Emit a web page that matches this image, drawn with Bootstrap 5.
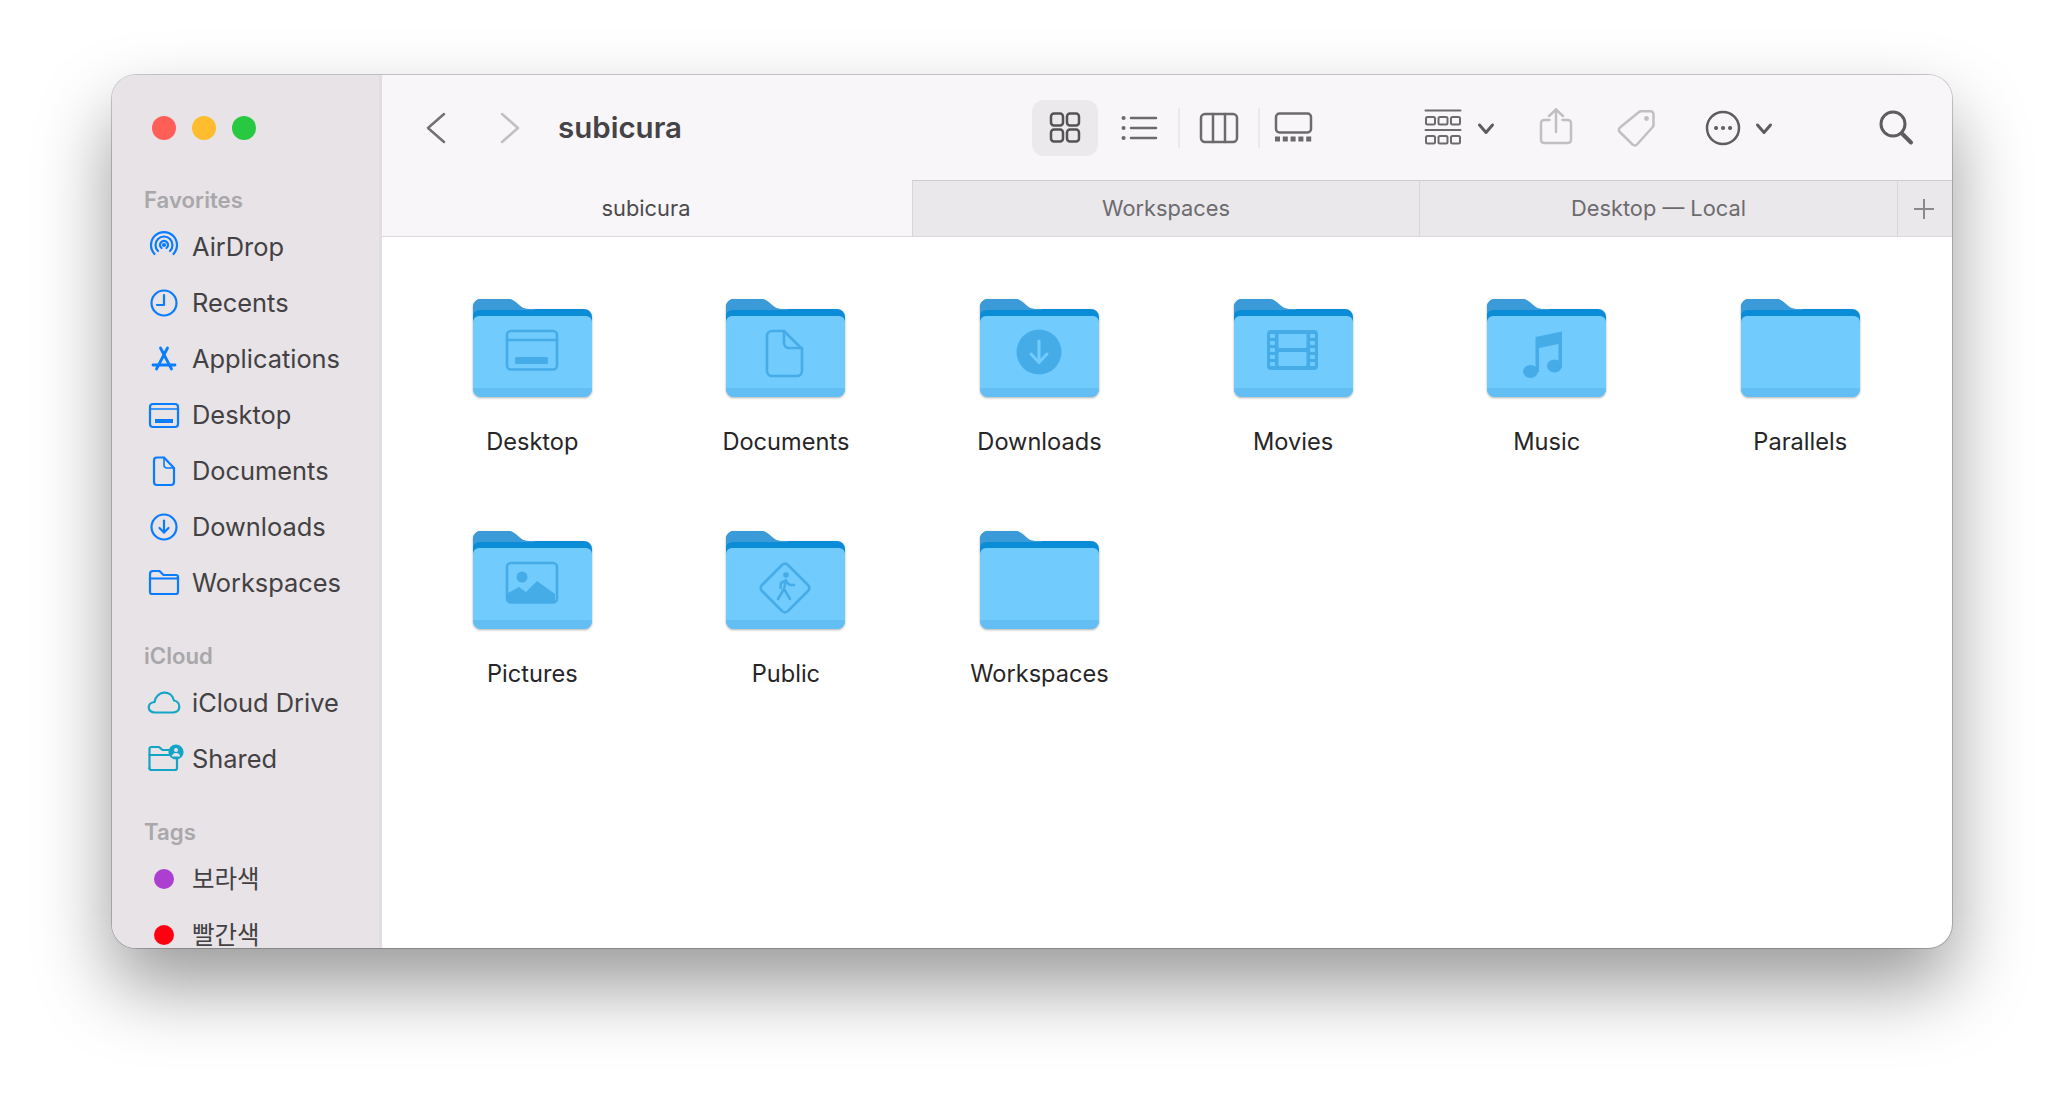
<!DOCTYPE html>
<html lang="en">
<head>
    <meta charset="UTF-8">
    <meta name="viewport" content="width=device-width, initial-scale=1.0">
    <title>Finder - subicura</title>
    <link href="https://cdn.jsdelivr.net/npm/bootstrap@5.3.0/dist/css/bootstrap.min.css" rel="stylesheet">
    <style>
        body { background: #fff; font-family: "Inter", "Noto Sans CJK KR", sans-serif; height: 1096px; overflow: hidden; padding: 75px 0 0 112px; }
        svg { display: block; flex: none; }

        .finder-window { width: 1840px; height: 873px; border-radius: 24px; overflow: hidden; background: #fff;
            box-shadow: 0 0 0 1px rgba(0,0,0,.2), 0 38px 76px rgba(0,0,0,.4); }

        /* sidebar */
        .side-panel { width: 270px; flex: none; background: #e7e3e6; border-right: 3px solid #e0dee0; padding-left: 32px; overflow: hidden; }
        .traffic { height: 24px; margin: 41px 0 0 8px; gap: 16px; }
        .traffic span { width: 24px; height: 24px; border-radius: 50%; }
        .side-label { font-size: 22.2px; font-weight: 600; line-height: 30px; color: #a9a7aa; margin: 30px 0 4px 0; }
        .side-label.first { margin-top: 45px; }
        .side-item { height: 56px; font-size: 25.4px; color: #434143; gap: 8px; }
        .side-item svg { fill: none; stroke: #0a7cff; stroke-width: 2.2; stroke-linecap: round; stroke-linejoin: round; }
        .side-item svg.cloud { stroke: #12a5c6; }
        .side-item .ko-name { font-size: 24.5px; }
        .tag-dot { width: 40px; height: 20px; flex: none; display: flex; justify-content: center; }
        .tag-dot span { width: 20px; height: 20px; border-radius: 50%; }

        /* toolbar */
        .tool-bar { height: 105px; background: #f8f6f9; padding: 0 36px 0 38px; }
        .tool-bar svg { fill: none; stroke: #6c6a6d; stroke-width: 2.5; stroke-linecap: round; stroke-linejoin: round; }
        .tool-bar svg.dim { stroke: #c1bfc2; }
        .fwd-btn { margin-left: 42px; }
        .win-title { font-size: 29.5px; font-weight: 600; color: #454345; margin-left: 32px; }
        .view-active { background: #ebe9ec; border-radius: 12px; height: 56px; width: 66px; }
        .view-active svg { stroke: #545255; }
        .view-list { margin-left: 11px; }
        .tool-sep { width: 2px; height: 40px; background: #ebe9ec; margin: 0 9px; }
        .tool-group { margin-left: 104px; }
        .tool-caret { margin-left: 13px; }
        .tool-caret.near { margin-left: 11px; }
        .tool-bar svg.caret-icon { stroke: #5e5c5f; stroke-width: 3; }
        .tool-share, .tool-tag { margin-left: 40px; }
        .tool-more { margin-left: 47px; }
        .tool-search { margin-left: 102px; }

        /* tabs */
        .tab-strip { height: 57px; border-bottom: 1px solid #dcdadc; font-size: 21.8px; color: #6d6b6e; }
        .tab-item { border-top: 1px solid #cdcbce; border-left: 1px solid #d8d6d9; background: #eae8eb; }
        .tab-item.on { background: #f8f6f9; border-top-color: #f8f6f9; border-left: 0; color: #4b494c; width: 530px; padding-right: 2px; }
        .tab-two { width: 507px; }
        .tab-three { width: 478px; }
        .tab-plus { width: 55px; padding-right: 3px; }

        /* folders */
        .folder-grid { display: grid; grid-template-columns: repeat(6, 253.6px); grid-auto-rows: 232px; padding: 62px 0 0 23.5px; }
        .folder-cell { display: flex; flex-direction: column; align-items: center; }
        .folder-cell svg { filter: drop-shadow(0 1px 1px rgba(0,0,0,.3)); }
        .folder-name { margin-top: 28px; font-size: 23.6px; line-height: 30px; color: #272527; }
        .glyph { fill: #45ace8; }
        .glyph-line { fill: none; stroke: #45ace8; stroke-width: 2.6; stroke-linecap: round; stroke-linejoin: round; }
    </style>
</head>
<body>

<!-- shared folder shape -->
<svg width="0" height="0" class="position-absolute">
    <symbol id="folder-base" viewBox="0 0 119 100">
        <path d="M8 0H34C38 0 40 1 43 3.500L47 7C49.500 9 51 10 55 10H111a8 8 0 0 1 8 8V30H0V8a8 8 0 0 1 8-8Z" fill="#0b8cd7"/>
        <path d="M8 0H34C38 0 40 1 43 3.500L47 7C49.500 9 51 10 55 10H62V11H8C3 11 0 13 0 17V8a8 8 0 0 1 8-8Z" fill="#3b9bd8"/>
        <path d="M6 17H113a6 6 0 0 1 6 6V90a8 8 0 0 1-8 8H8a8 8 0 0 1-8-8V23a6 6 0 0 1 6-6Z" fill="#72cbfd"/>
        <path d="M0 89H119V90a8 8 0 0 1-8 8H8a8 8 0 0 1-8-8Z" fill="#62bef3"/>
    </symbol>
</svg>

<div class="finder-window d-flex">

    <!-- Sidebar -->
    <aside class="side-panel">
        <div class="traffic d-flex">
            <span style="background:#ff5f57"></span>
            <span style="background:#febc2e"></span>
            <span style="background:#28c840"></span>
        </div>

        <div class="side-label first">Favorites</div>
        <div class="side-item d-flex align-items-center">
            <svg width="40" height="40" viewBox="0 0 40 40"><path d="M10.500 27A13 13 0 1 1 29.500 27"/><path d="M14 24A8.500 8.500 0 1 1 26 24"/><path d="M17.500 21A4 4 0 1 1 22.500 21"/><circle cx="20" cy="18" r="1" /></svg>
            <span>AirDrop</span>
        </div>
        <div class="side-item d-flex align-items-center">
            <svg width="40" height="40" viewBox="0 0 40 40"><circle cx="20" cy="20" r="12.500"/><path d="M20 12V22H13"/></svg>
            <span>Recents</span>
        </div>
        <div class="side-item d-flex align-items-center">
            <svg width="40" height="40" viewBox="0 0 40 40" style="stroke-width:2.8"><path d="M23.500 9L12.500 30"/><path d="M16.500 9L27.500 30"/><path d="M9 26H31"/></svg>
            <span>Applications</span>
        </div>
        <div class="side-item d-flex align-items-center">
            <svg width="40" height="40" viewBox="0 0 40 40"><rect x="6" y="9" width="28" height="23" rx="3"/><path d="M6 14H34" stroke-width="1.400"/><path d="M11 26H29" stroke-width="4" stroke-linecap="butt"/></svg>
            <span>Desktop</span>
        </div>
        <div class="side-item d-flex align-items-center">
            <svg width="40" height="40" viewBox="0 0 40 40"><path d="M13 6.500H20L30 17V31a3 3 0 0 1-3 3H13a3 3 0 0 1-3-3V9.500a3 3 0 0 1 3-3Z"/><path d="M20 6.500V14a3 3 0 0 0 3 3H30" stroke-width="1.600"/></svg>
            <span>Documents</span>
        </div>
        <div class="side-item d-flex align-items-center">
            <svg width="40" height="40" viewBox="0 0 40 40"><circle cx="20" cy="20" r="12.500"/><path d="M20 13.500V25.500"/><path d="M15.500 21L20 25.500L24.500 21"/></svg>
            <span>Downloads</span>
        </div>
        <div class="side-item d-flex align-items-center">
            <svg width="40" height="40" viewBox="0 0 40 40"><path d="M6 29V11a3 3 0 0 1 3-3H15.500L19.500 12H32a2 2 0 0 1 2 2V29a2 2 0 0 1-2 2H8a2 2 0 0 1-2-2Z"/><path d="M6 15.500H34"/></svg>
            <span>Workspaces</span>
        </div>

        <div class="side-label">iCloud</div>
        <div class="side-item d-flex align-items-center">
            <svg class="cloud" width="40" height="40" viewBox="0 0 40 40"><path d="M11 29.500C2.500 29.500 3 19.500 10.500 19C12 8 27 5.500 30 17.500C37 18.500 37.500 29.500 29 29.500Z"/></svg>
            <span>iCloud Drive</span>
        </div>
        <div class="side-item d-flex align-items-center">
            <svg class="cloud" width="40" height="40" viewBox="0 0 40 40"><path d="M5.500 30V10a2 2 0 0 1 2-2H15L18.500 11H25"/><path d="M5.500 16H25"/><path d="M5.500 29a2 2 0 0 0 2 2H31a2 2 0 0 0 2-2V20"/><circle cx="32" cy="13" r="6.500" fill="#12a5c6"/><circle cx="32" cy="11" r="2" fill="#e7e3e6" stroke="none"/><path d="M28 17.500a4 3.500 0 0 1 8 0Z" fill="#e7e3e6" stroke="none"/></svg>
            <span>Shared</span>
        </div>

        <div class="side-label">Tags</div>
        <div class="side-item d-flex align-items-center">
            <div class="tag-dot"><span style="background:#ab3fd0"></span></div>
            <span class="ko-name">보라색</span>
        </div>
        <div class="side-item d-flex align-items-center">
            <div class="tag-dot"><span style="background:#ff0010"></span></div>
            <span class="ko-name">빨간색</span>
        </div>
    </aside>

    <!-- Main area -->
    <main class="flex-grow-1 d-flex flex-column">
        <div class="tool-bar d-flex align-items-center">
            <svg width="32" height="40" viewBox="0 0 32 40"><path d="M24 6L8 20L24 34" stroke="#737174"/></svg>
            <svg class="dim fwd-btn" width="32" height="40" viewBox="0 0 32 40"><path d="M8 6L24 20L8 34"/></svg>
            <div class="win-title flex-grow-1">subicura</div>

            <div class="view-active d-flex align-items-center">
                <svg width="66" height="40" viewBox="0 0 66 40"><rect x="19" y="5.500" width="12" height="12" rx="3"/><rect x="35" y="5.500" width="12" height="12" rx="3"/><rect x="19" y="21.500" width="12" height="12" rx="3"/><rect x="35" y="21.500" width="12" height="12" rx="3"/></svg>
            </div>
            <svg class="view-list" width="60" height="40" viewBox="0 0 60 40"><path d="M22 10H47M22 20H47M22 30H47"/><path d="M14.500 10h.1M14.500 20h.1M14.500 30h.1" stroke-width="4"/></svg>
            <div class="tool-sep"></div>
            <svg width="60" height="40" viewBox="0 0 60 40"><rect x="12" y="6" width="36" height="28" rx="4"/><path d="M24 6V34M36 6V34"/></svg>
            <div class="tool-sep"></div>
            <svg width="50" height="40" viewBox="0 0 50 40"><rect x="7" y="5.500" width="35" height="19" rx="3.500"/><path d="M6 31h5M13.800 31h5M21.600 31h5M29.400 31h5M37.200 31h5" stroke-width="5" stroke-linecap="butt"/></svg>

            <svg class="tool-group" width="40" height="40" viewBox="0 0 40 40" style="stroke-width:2"><path d="M2.500 2.500H37.500M2.500 22H37.500"/><rect x="3" y="9" width="9" height="7.500" rx="1.500"/><rect x="15.500" y="9" width="9" height="7.500" rx="1.500"/><rect x="28" y="9" width="9" height="7.500" rx="1.500"/><rect x="3" y="28" width="9" height="7.500" rx="1.500"/><rect x="15.500" y="28" width="9" height="7.500" rx="1.500"/><rect x="28" y="28" width="9" height="7.500" rx="1.500"/></svg>
            <svg class="tool-caret caret-icon" width="20" height="40" viewBox="0 0 20 40"><path d="M3.500 17L10 24.500L16.500 17"/></svg>
            <svg class="tool-share dim" width="40" height="40" viewBox="0 0 40 40"><path d="M13.500 12H8a3 3 0 0 0-3 3V32a3 3 0 0 0 3 3H32a3 3 0 0 0 3-3V15a3 3 0 0 0-3-3H26.500"/><path d="M20 24V1.500"/><path d="M13 8L20 1.500L27 8"/></svg>
            <svg class="tool-tag dim" width="40" height="40" viewBox="0 0 40 40"><path d="M4 19.500L23 4a3 3 0 0 1 2-.7H34.500a3 3 0 0 1 3 3V17a3 3 0 0 1-.8 2L21 36.500a3 3 0 0 1-4.300.2L3.800 24a3 3 0 0 1 .2-4.500Z"/><circle cx="30.500" cy="10.500" r="1.200"/></svg>
            <svg class="tool-more" width="40" height="40" viewBox="0 0 40 40" style="stroke:#5e5c5f"><circle cx="20" cy="20" r="16"/><path d="M13 20h.1M20 20h.1M27 20h.1" stroke-width="4"/></svg>
            <svg class="tool-caret near caret-icon" width="20" height="40" viewBox="0 0 20 40"><path d="M3.500 17L10 24.500L16.500 17"/></svg>
            <svg class="tool-search" width="40" height="40" viewBox="0 0 40 40" style="stroke:#5e5c5f;stroke-width:3"><circle cx="17" cy="16" r="12"/><path d="M26 25.500L35 34.500" stroke-width="4"/></svg>
        </div>

        <div class="tab-strip d-flex">
            <div class="tab-item on d-flex align-items-center justify-content-center">subicura</div>
            <div class="tab-item tab-two d-flex align-items-center justify-content-center">Workspaces</div>
            <div class="tab-item tab-three d-flex align-items-center justify-content-center">Desktop — Local</div>
            <div class="tab-item tab-plus d-flex align-items-center justify-content-center">
                <svg width="24" height="24" viewBox="0 0 24 24"><path d="M12 2V22M2 12H22" stroke="#8b898c" stroke-width="2"/></svg>
            </div>
        </div>

        <div class="folder-grid">
            <div class="folder-cell">
                <svg width="119" height="100" viewBox="0 0 119 100"><use href="#folder-base"/>
                    <rect class="glyph-line" x="34" y="32" width="50" height="38.500" rx="4"/><path class="glyph-line" d="M34 41H84" stroke-width="1.600"/><rect class="glyph" x="42" y="58" width="33" height="7" rx="1.500"/></svg>
                <div class="folder-name">Desktop</div>
            </div>
            <div class="folder-cell">
                <svg width="119" height="100" viewBox="0 0 119 100"><use href="#folder-base"/>
                    <path class="glyph-line" d="M46 32H58L76 50V72a5 5 0 0 1-5 5H46a5 5 0 0 1-5-5V37a5 5 0 0 1 5-5Z"/><path class="glyph-line" d="M58 32V44a5 5 0 0 0 5 5H76" stroke-width="2"/></svg>
                <div class="folder-name">Documents</div>
            </div>
            <div class="folder-cell">
                <svg width="119" height="100" viewBox="0 0 119 100"><use href="#folder-base"/>
                    <circle class="glyph" cx="59" cy="53" r="22.500"/><path d="M59 42V63M51 55L59 63.500L67 55" fill="none" stroke="#72cbfd" stroke-width="3" stroke-linecap="round" stroke-linejoin="round"/></svg>
                <div class="folder-name">Downloads</div>
            </div>
            <div class="folder-cell">
                <svg width="119" height="100" viewBox="0 0 119 100"><use href="#folder-base"/>
                    <rect class="glyph" x="33" y="31" width="51" height="40" rx="4"/>
                    <g fill="#72cbfd"><rect x="44.500" y="35" width="28" height="14" rx="1"/><rect x="44.500" y="53" width="28" height="14" rx="1"/>
                    <rect x="36" y="35" width="5" height="4" rx="1"/><rect x="36" y="42" width="5" height="4" rx="1"/><rect x="36" y="49" width="5" height="4" rx="1"/><rect x="36" y="56" width="5" height="4" rx="1"/><rect x="36" y="63" width="5" height="4" rx="1"/>
                    <rect x="76" y="35" width="5" height="4" rx="1"/><rect x="76" y="42" width="5" height="4" rx="1"/><rect x="76" y="49" width="5" height="4" rx="1"/><rect x="76" y="56" width="5" height="4" rx="1"/><rect x="76" y="63" width="5" height="4" rx="1"/></g></svg>
                <div class="folder-name">Movies</div>
            </div>
            <div class="folder-cell">
                <svg width="119" height="100" viewBox="0 0 119 100"><use href="#folder-base"/>
                    <path class="glyph" d="M48.500 38L75 32.500V68H71.500V45L52 49V73H48.500Z"/><ellipse class="glyph" cx="43.500" cy="72.500" rx="7.500" ry="6.500"/><ellipse class="glyph" cx="67.500" cy="67" rx="7.500" ry="6.500"/></svg>
                <div class="folder-name">Music</div>
            </div>
            <div class="folder-cell">
                <svg width="119" height="100" viewBox="0 0 119 100"><use href="#folder-base"/></svg>
                <div class="folder-name">Parallels</div>
            </div>
            <div class="folder-cell">
                <svg width="119" height="100" viewBox="0 0 119 100"><use href="#folder-base"/>
                    <rect class="glyph-line" x="34" y="32" width="50" height="39.500" rx="4"/><circle class="glyph" cx="49" cy="46" r="5.500"/><path class="glyph" d="M35 62L46 56L53 61L64 50L82 63V68a4 4 0 0 1-4 4H38a4 4 0 0 1-4-4Z"/></svg>
                <div class="folder-name">Pictures</div>
            </div>
            <div class="folder-cell">
                <svg width="119" height="100" viewBox="0 0 119 100"><use href="#folder-base"/>
                    <path class="glyph-line" d="M56 34L36 54a4 4 0 0 0 0 6L56 80a4 4 0 0 0 6 0L82 60a4 4 0 0 0 0-6L62 34a4 4 0 0 0-6 0Z" stroke-width="3"/><circle class="glyph" cx="60" cy="44" r="2.800"/><path class="glyph-line" d="M60 49L58 58L52 68M58 58L64 68M60 49.500L55 52L54.500 57M60 50L63.500 54H68" stroke-width="2.400"/></svg>
                <div class="folder-name">Public</div>
            </div>
            <div class="folder-cell">
                <svg width="119" height="100" viewBox="0 0 119 100"><use href="#folder-base"/></svg>
                <div class="folder-name">Workspaces</div>
            </div>
        </div>
    </main>
</div>

<script src="https://cdn.jsdelivr.net/npm/bootstrap@5.3.0/dist/js/bootstrap.bundle.min.js"></script>
</body>
</html>
